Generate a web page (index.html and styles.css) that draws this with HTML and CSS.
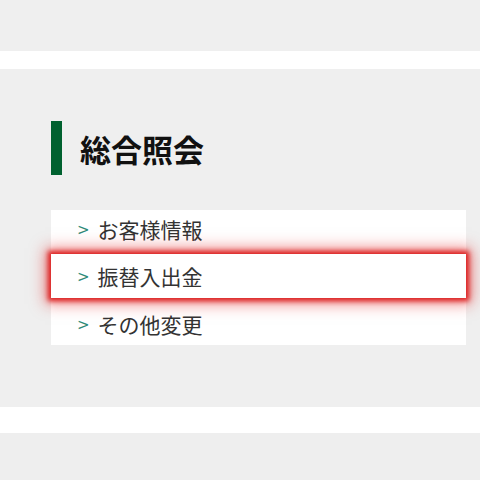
FILE: index.html
```html
<!DOCTYPE html>
<html lang="ja">
<head>
<meta charset="utf-8">
<link rel="stylesheet" href="styles.css">
</head>
<body>
<div class="band band-top"></div>
<div class="gap gap-a"></div>
<section class="band section">
  <h2 class="heading">総合照会</h2>
  <ul class="menu">
    <li class="item item-first"><span class="arrow">&gt;</span><span class="label">お客様情報</span></li>
    <li class="item item-active"><span class="arrow">&gt;</span><span class="label">振替入出金</span></li>
    <li class="item item-last"><span class="arrow">&gt;</span><span class="label">その他変更</span></li>
  </ul>
</section>
<div class="gap gap-b"></div>
<div class="band band-bottom"></div>
</body>
</html>
```
FILE: styles.css
```css
html, body {
  margin: 0;
  padding: 0;
  background: #ffffff;
  font-family: "Noto Sans CJK JP", "Noto Sans", sans-serif;
}
.band {
  background: #efefef;
}
.band-top {
  height: 51px;
}
.gap-a {
  height: 18px;
}
.gap-b {
  height: 26px;
}
.band-bottom {
  height: 60px;
  background: #eeeeee;
}
.section {
  padding: 52px 14px 62px 51px;
}
.heading {
  margin: 0;
  height: 54px;
  display: flex;
  align-items: center;
  border-left: 11px solid #00612f;
  padding-left: 18px;
  font-size: 31px;
  font-weight: 700;
  color: #111111;
  line-height: 1;
}
.menu {
  list-style: none;
  margin: 35px 0 0 0;
  padding: 0;
  background: #ffffff;
}
.item {
  box-sizing: border-box;
  height: 44px;
  display: flex;
  align-items: center;
  padding-left: 26px;
  gap: 8px;
  color: #333333;
  font-size: 21px;
}
.item-first {
  padding-bottom: 6px;
}
.item-last {
  height: 47px;
  padding-top: 5px;
}
.item-active {
  position: relative;
  background: #ffffff;
  box-shadow: 0 0 5px 3px rgba(220, 30, 30, 1), 0 0 14px 6px rgba(225, 45, 45, 0.55);
  z-index: 1;
}
.arrow {
  color: #2f8a78;
  font-size: 15px;
  font-family: "DejaVu Sans", sans-serif;
  margin-top: 2px;
}
.label {
  line-height: 1;
}
```
